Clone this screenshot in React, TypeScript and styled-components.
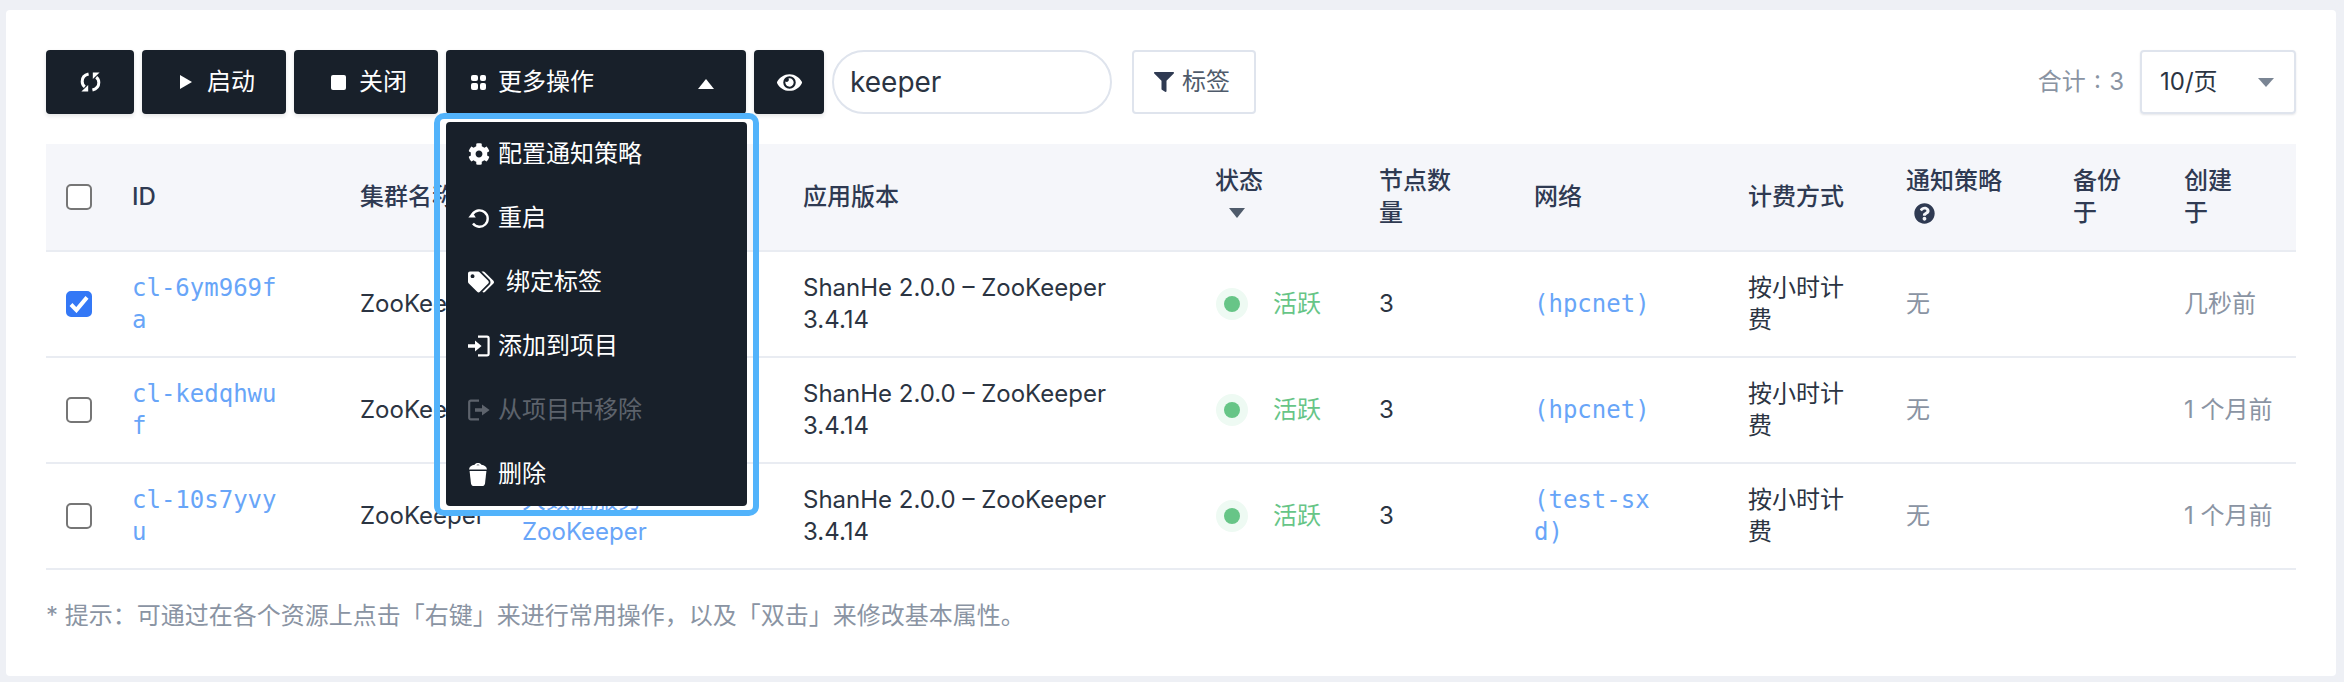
import { ReactNode } from 'react'
import styled, { createGlobalStyle } from 'styled-components'
import { FaCog, FaEye, FaFilter, FaQuestionCircle, FaTags } from 'react-icons/fa'

const sans = '"Inter", "Noto Sans CJK SC", sans-serif'
const mono = '"DejaVu Sans Mono", "Noto Sans CJK SC", monospace'

const GlobalStyle = createGlobalStyle`
  html, body {
    margin: 0;
    background: #eef0f5;
  }
  body {
    font-family: ${sans};
    font-size: 24px;
    line-height: 32px;
    color: #2b3442;
  }
`

const Card = styled.div`
  position: relative;
  box-sizing: border-box;
  height: 666px;
  margin: 10px 8px 6px 6px;
  padding: 40px;
  background: #fff;
  border-radius: 4px;
`

const Toolbar = styled.div`
  display: flex;
  align-items: stretch;
  height: 64px;
  margin-bottom: 30px;
`

const DarkButton = styled.button<{ $w: number; $pl?: number; $center?: boolean }>`
  display: flex;
  align-items: center;
  justify-content: ${p => (p.$center ? 'center' : 'flex-start')};
  box-sizing: border-box;
  width: ${p => p.$w}px;
  height: 64px;
  margin-right: 8px;
  padding: 0 0 0 ${p => p.$pl ?? 0}px;
  border: 0;
  border-radius: 4px;
  background: #18202a;
  color: #fff;
  font: inherit;
  box-shadow: 0 2px 4px rgba(24, 32, 42, 0.12);
`

const PlayMark = styled.span`
  width: 0;
  height: 0;
  margin-right: 15px;
  border-left: 12px solid #fff;
  border-top: 7px solid transparent;
  border-bottom: 7px solid transparent;
`

const StopMark = styled.span`
  width: 15px;
  height: 15px;
  margin-right: 13px;
  border-radius: 2px;
  background: #fff;
`

const MoreWrap = styled.div`
  position: relative;
`

const CaretUp = styled.span`
  width: 0;
  height: 0;
  margin-left: auto;
  margin-right: 32px;
  margin-top: 4px;
  border-left: 8px solid transparent;
  border-right: 8px solid transparent;
  border-bottom: 10px solid #fff;
`

const Dots = styled.span`
  display: grid;
  grid-template-columns: 6.5px 6.5px;
  gap: 2px;
  margin-right: 12px;
  i {
    width: 6.5px;
    height: 6.5px;
    border-radius: 2px;
    background: #fff;
  }
`

const MenuFrame = styled.div`
  position: absolute;
  z-index: 5;
  top: 63px;
  left: -12px;
  width: 325px;
  box-sizing: border-box;
  padding: 3px 6px 4px;
  border: 6px solid #52b3fb;
  border-radius: 10px;
`

const Menu = styled.ul`
  margin: 0;
  padding: 0;
  list-style: none;
  background: #18202a;
  border-radius: 4px;
`

const MenuItem = styled.li<{ $disabled?: boolean }>`
  display: flex;
  align-items: center;
  height: 64px;
  padding-left: 22px;
  color: ${p => (p.$disabled ? '#5d636c' : '#fff')};
  svg {
    flex: none;
  }
`

const MenuIcon = styled.span<{ $w?: number }>`
  display: inline-flex;
  justify-content: flex-start;
  width: ${p => p.$w ?? 30}px;
`

const SearchBox = styled.input`
  box-sizing: border-box;
  width: 280px;
  height: 64px;
  padding: 0 16px;
  border: 2px solid #dfe4ed;
  border-radius: 32px;
  outline: 0;
  color: #2b3442;
  font-family: ${sans};
  font-size: 28px;
`

const FilterButton = styled.button`
  display: flex;
  align-items: center;
  box-sizing: border-box;
  width: 124px;
  height: 64px;
  margin-left: 20px;
  padding: 0 0 0 20px;
  border: 2px solid #dfe4ed;
  border-radius: 4px;
  background: #fff;
  color: #4f5b6b;
  font: inherit;
  svg {
    margin-right: 8px;
    color: #2f3a52;
  }
`

const Pager = styled.div`
  display: flex;
  align-items: center;
  margin-left: auto;
`

const Total = styled.span`
  margin-right: 16px;
  color: #8a94a3;
  word-spacing: 1.5px;
`

const PageSelect = styled.div`
  display: flex;
  align-items: center;
  justify-content: space-between;
  box-sizing: border-box;
  width: 156px;
  height: 64px;
  padding: 0 20px 0 18px;
  border: 2px solid #dfe4ed;
  border-radius: 4px;
  box-shadow: 0 1px 2px rgba(47, 58, 82, 0.12);
`

const CaretDown = styled.span<{ $color: string; $h?: number }>`
  display: block;
  width: 0;
  height: 0;
  border-left: 8px solid transparent;
  border-right: 8px solid transparent;
  border-top: ${p => p.$h ?? 10}px solid ${p => p.$color};
`

const Table = styled.table`
  width: 2250px;
  table-layout: fixed;
  border-collapse: separate;
  border-spacing: 0;
`

const Col = styled.col<{ $w: number }>`
  width: ${p => p.$w}px;
`

const Th = styled.th`
  box-sizing: border-box;
  height: 108px;
  padding: 0 0 0 20px;
  background: #f5f6fa;
  border-bottom: 2px solid #e9ecf2;
  color: #2f3a52;
  font-weight: 500;
  text-align: left;
  vertical-align: middle;
`

const Td = styled.td<{ $muted?: boolean }>`
  box-sizing: border-box;
  height: 106px;
  padding: 0 0 0 20px;
  border-bottom: 2px solid #e9ecf2;
  color: ${p => (p.$muted ? '#8a94a3' : '#2b3442')};
  vertical-align: middle;
`

const Wrap = styled.div<{ $w: number }>`
  width: ${p => p.$w}px;
`

const MonoLink = styled.a<{ $w: number }>`
  display: block;
  width: ${p => p.$w}px;
  color: #68a5f8;
  font-family: ${mono};
  word-break: break-all;
`

const TextLink = styled.a`
  display: block;
  color: #68a5f8;
`

const Check = styled.span<{ $checked?: boolean }>`
  display: flex;
  align-items: center;
  justify-content: center;
  box-sizing: border-box;
  width: 26px;
  height: 26px;
  border: 2px solid ${p => (p.$checked ? '#3478f6' : '#767676')};
  border-radius: 5px;
  background: ${p => (p.$checked ? '#3478f6' : '#fff')};
`

const Status = styled.div`
  display: flex;
  align-items: center;
  padding-left: 1px;
  color: #67c587;
`

const Halo = styled.span`
  display: flex;
  align-items: center;
  justify-content: center;
  width: 32px;
  height: 32px;
  margin-right: 25px;
  border-radius: 50%;
  background: #eefaf3;
  &::after {
    content: '';
    width: 16px;
    height: 16px;
    border-radius: 50%;
    background: #67c587;
  }
`

const SortCaret = styled.div`
  height: 32px;
  display: flex;
  align-items: center;
  padding-left: 14px;
`

const HelpIcon = styled.div`
  display: flex;
  align-items: center;
  height: 32px;
  padding-left: 8px;
`

const Hint = styled.p`
  margin: 30px 0 0;
  color: #8a94a3;
`

const columns = [66, 228, 162, 281, 412, 164, 155, 214, 158, 167, 111, 132]

const clusters = [
  { id: 'cl-6ym969fa', net: '(hpcnet)', created: '几秒前', checked: true },
  { id: 'cl-kedqhwuf', net: '(hpcnet)', created: '1 个月前', checked: false },
  { id: 'cl-10s7yvyu', net: '(test-sxd)', created: '1 个月前', checked: false },
]

function RefreshIcon() {
  return (
    <svg width="21" height="22" viewBox="0 0 21 22" fill="none" stroke="#fff" strokeWidth="3">
      <path d="M8.6 3C4.6 3.9 2.2 6.8 2.2 10.4c0 2.2.9 4.1 2.6 5.4" />
      <path d="M12.4 19c4-.9 6.4-3.8 6.4-7.4 0-2.2-.9-4.1-2.6-5.4" />
      <path d="M1.4 20.6h6.8v-6.6z" fill="#fff" stroke="none" />
      <path d="M19.6 1.4h-6.8V8z" fill="#fff" stroke="none" />
    </svg>
  )
}

function RestartIcon() {
  return (
    <svg width="22" height="22" viewBox="0 0 22 22" fill="none" stroke="#fff" strokeWidth="2.4">
      <path d="M4.6 7.2A8.2 8.2 0 1 1 5 16.6" />
      <path d="M0.4 10.6h7.4L4.4 5.2z" fill="#fff" stroke="none" />
    </svg>
  )
}

function EnterIcon({ color }: { color: string }) {
  return (
    <svg width="22" height="22" viewBox="0 0 22 22" fill="none" stroke={color} strokeWidth="2.2">
      <path d="M10 1.6h9a1.6 1.6 0 0 1 1.6 1.6v15.6a1.6 1.6 0 0 1-1.6 1.6h-9" />
      <path d="M0 9.2h7V5.4l6.6 5.6L7 16.6v-3.8H0z" fill={color} stroke="none" />
    </svg>
  )
}

function ExitIcon({ color }: { color: string }) {
  return (
    <svg width="22" height="22" viewBox="0 0 22 22" fill="none" stroke={color} strokeWidth="2.2">
      <path d="M11 1.6H2.8A1.6 1.6 0 0 0 1.2 3.2v15.6a1.6 1.6 0 0 0 1.6 1.6H11" />
      <path d="M7 9.2h7V5.4l7.6 5.6-7.6 5.6v-3.8H7z" fill={color} stroke="none" />
    </svg>
  )
}

function TrashIcon() {
  return (
    <svg width="20" height="23" viewBox="0 0 20 23" fill="#fff">
      <path d="M1 6.4C1.4 3.4 3.4 2.4 6.6 1.8 7.2.6 8.4 0 10 0s2.8.6 3.4 1.8c3.2.6 5.2 1.6 5.6 4.6zM8.4 2.2h3.2c-.4-.5-.9-.7-1.6-.7s-1.2.2-1.6.7z" fillRule="evenodd" />
      <path d="M1.6 8h16.8l-1.4 12.4C16.800 22 15.600 23 14 23H6c-1.600 0-2.800-1-3-2.600z" />
    </svg>
  )
}

function Checkbox({ checked }: { checked?: boolean }) {
  return (
    <Check $checked={checked}>
      {checked && (
        <svg width="20" height="18" viewBox="0 0 20 18" fill="none" stroke="#fff" strokeWidth="4">
          <path d="M2 9.5l5.4 5.6L18 2.4" />
        </svg>
      )}
    </Check>
  )
}

function Item({ icon, w, disabled, children }: { icon: ReactNode; w?: number; disabled?: boolean; children: ReactNode }) {
  return (
    <MenuItem $disabled={disabled}>
      <MenuIcon $w={w}>{icon}</MenuIcon>
      {children}
    </MenuItem>
  )
}

export default function App() {
  return (
    <>
      <GlobalStyle />
      <Card>
        <Toolbar>
          <DarkButton $w={88} $center>
            <RefreshIcon />
          </DarkButton>
          <DarkButton $w={144} $pl={38}>
            <PlayMark />
            启动
          </DarkButton>
          <DarkButton $w={144} $pl={37}>
            <StopMark />
            关闭
          </DarkButton>
          <MoreWrap>
            <DarkButton $w={300} $pl={25}>
              <Dots>
                <i />
                <i />
                <i />
                <i />
              </Dots>
              更多操作
              <CaretUp />
            </DarkButton>
            <MenuFrame>
              <Menu>
                <Item icon={<FaCog size={22} />}>配置通知策略</Item>
                <Item icon={<RestartIcon />}>重启</Item>
                <Item icon={<FaTags size={26} />} w={38}>
                  绑定标签
                </Item>
                <Item icon={<EnterIcon color="#fff" />}>添加到项目</Item>
                <Item icon={<ExitIcon color="#5d636c" />} disabled>
                  从项目中移除
                </Item>
                <Item icon={<TrashIcon />}>删除</Item>
              </Menu>
            </MenuFrame>
          </MoreWrap>
          <DarkButton $w={70} $center>
            <FaEye size={25} />
          </DarkButton>
          <SearchBox value="keeper" readOnly />
          <FilterButton>
            <FaFilter size={20} />
            标签
          </FilterButton>
          <Pager>
            <Total>合计 : 3</Total>
            <PageSelect>
              10/页
              <CaretDown $color="#7a8594" $h={9} />
            </PageSelect>
          </Pager>
        </Toolbar>

        <Table>
          <colgroup>
            {columns.map((w, i) => (
              <Col key={i} $w={w} />
            ))}
          </colgroup>
          <thead>
            <tr>
              <Th>
                <Checkbox />
              </Th>
              <Th>ID</Th>
              <Th>集群名称</Th>
              <Th>应用</Th>
              <Th>应用版本</Th>
              <Th>
                <Wrap $w={60}>状态</Wrap>
                <SortCaret>
                  <CaretDown $color="#4f5b6b" />
                </SortCaret>
              </Th>
              <Th>
                <Wrap $w={80}>节点数量</Wrap>
              </Th>
              <Th>网络</Th>
              <Th>计费方式</Th>
              <Th>
                <Wrap $w={100}>通知策略</Wrap>
                <HelpIcon>
                  <FaQuestionCircle size={21} />
                </HelpIcon>
              </Th>
              <Th>
                <Wrap $w={60}>备份于</Wrap>
              </Th>
              <Th>
                <Wrap $w={60}>创建于</Wrap>
              </Th>
            </tr>
          </thead>
          <tbody>
            {clusters.map(c => (
              <tr key={c.id}>
                <Td>
                  <Checkbox checked={c.checked} />
                </Td>
                <Td>
                  <MonoLink $w={150}>{c.id}</MonoLink>
                </Td>
                <Td>ZooKeeper</Td>
                <Td>
                  <TextLink>大数据服务</TextLink>
                  <TextLink>ZooKeeper</TextLink>
                </Td>
                <Td>
                  <Wrap $w={320}>ShanHe 2.0.0 – ZooKeeper 3.4.14</Wrap>
                </Td>
                <Td>
                  <Status>
                    <Halo />
                    活跃
                  </Status>
                </Td>
                <Td>3</Td>
                <Td>
                  <MonoLink $w={120}>{c.net}</MonoLink>
                </Td>
                <Td>
                  <Wrap $w={100}>按小时计费</Wrap>
                </Td>
                <Td $muted>无</Td>
                <Td $muted />
                <Td $muted>{c.created}</Td>
              </tr>
            ))}
          </tbody>
        </Table>

        <Hint>* 提示：可通过在各个资源上点击「右键」来进行常用操作，以及「双击」来修改基本属性。</Hint>
      </Card>
    </>
  )
}
